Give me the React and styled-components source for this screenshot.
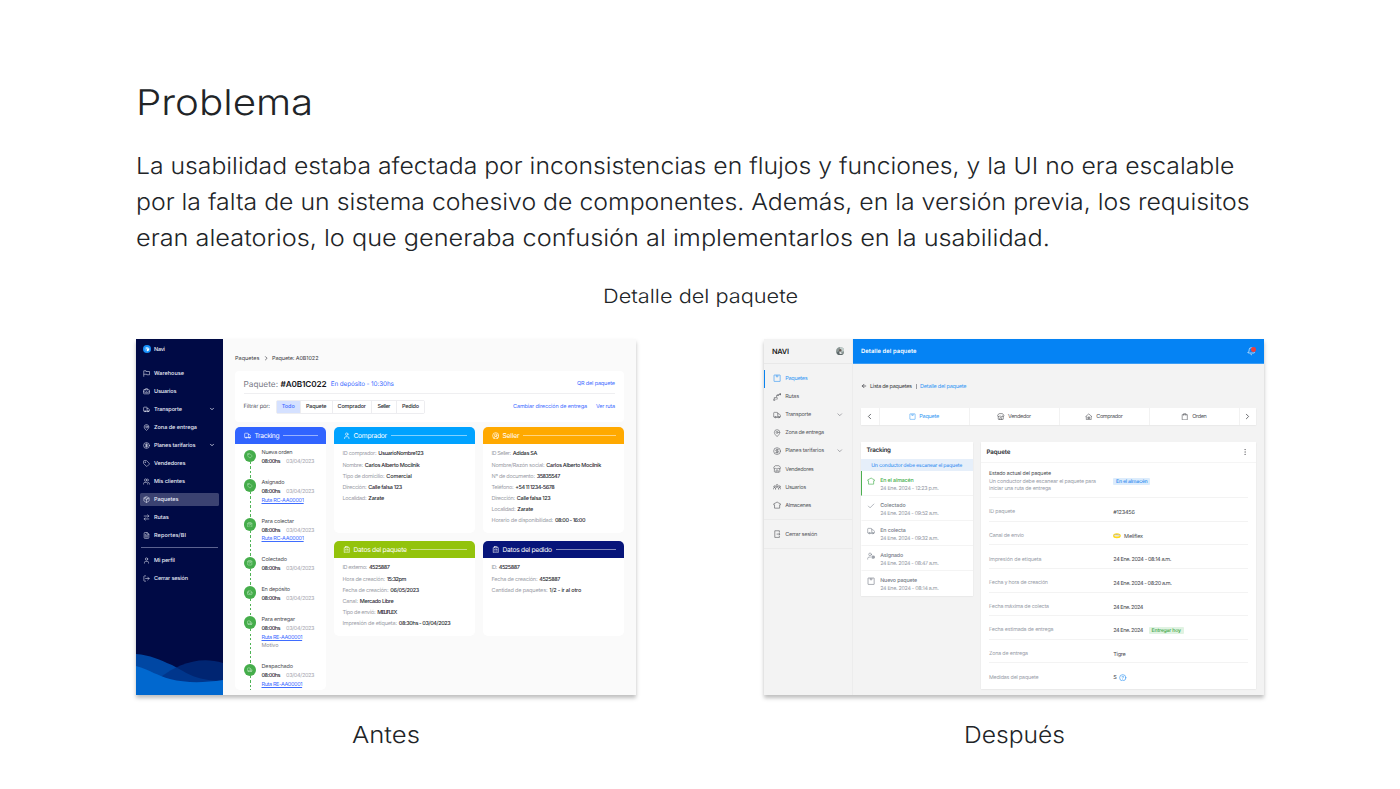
import React, { useLayoutEffect, useRef, useState } from "react";
import styled, { createGlobalStyle } from "styled-components";
import {
  Truck, MapPin, CircleDollarSign, Tag, Users, Package, FileText, User, LogOut,
  ChevronDown, ChevronRight, ChevronLeft, BriefcaseBusiness, CircleUserRound, ClipboardList,
  ShoppingBag, ArrowLeft, Store, Bell, EllipsisVertical, Check, UserCog, CircleHelp, Inbox, ArrowRightLeft,
} from "lucide-react";

const Global = createGlobalStyle`
  * { box-sizing: border-box; }
  body {
    margin: 0;
    background: #fff;
    font-family: Inter, "Liberation Sans", sans-serif;
    text-rendering: geometricPrecision;
  }
  svg { display: block; flex: none; }
`;

/* Text that fills a given measure, either tracked or widened. */
const Measure = styled.span`
  display: inline-block;
  flex: none;
  width: ${(p) => p.$w}px;
  white-space: nowrap;
  text-align: left;
  color: ${(p) => p.$color || "inherit"};
  font-weight: ${(p) => p.$weight || "inherit"};
  font-size: ${(p) => (p.$size ? p.$size + "px" : "inherit")};
  text-decoration: ${(p) => (p.$underline ? "underline" : "none")};
`;
const Run = styled.span`
  display: inline-block;
  transform-origin: 0 50%;
`;

function Fit({ w, children, color, weight, size, underline }) {
  const ref = useRef(null);
  const [spacing, setSpacing] = useState(0);
  useLayoutEffect(() => {
    const el = ref.current;
    const natural = el.getBoundingClientRect().width;
    const count = el.textContent.length;
    if (count > 1) setSpacing((w - natural) / (count - 1));
  }, [w]);
  return (
    <Measure $w={w} $color={color} $weight={weight} $size={size} $underline={underline}>
      <span ref={ref} style={{ letterSpacing: spacing }}>{children}</span>
    </Measure>
  );
}

function Wide({ w, children }) {
  const ref = useRef(null);
  const [scale, setScale] = useState(1);
  useLayoutEffect(() => {
    setScale(w / ref.current.offsetWidth);
  }, [w]);
  return (
    <Measure $w={w}>
      <Run ref={ref} style={{ transform: `scaleX(${scale})` }}>{children}</Run>
    </Measure>
  );
}

/* ---------- Slide ---------- */

const Slide = styled.main`
  width: 1400px;
  height: 789px;
  padding: 81px 136px 0;
  color: #212427;
  font-weight: 300;
  overflow: hidden;
`;
const Title = styled.h1`
  margin: 0;
  font-size: 35.5px;
  font-weight: 300;
  line-height: 44px;
`;
const Lead = styled.p`
  margin: 23px 0 0;
  display: flex;
  flex-direction: column;
  font-size: 23.4px;
  line-height: 36px;
`;
const Subtitle = styled.h2`
  margin: 28px 0 0;
  text-align: center;
  font-size: 19.5px;
  font-weight: 300;
  line-height: 24px;
`;
const Compare = styled.section`
  display: flex;
  justify-content: space-between;
  margin-top: 31px;
`;
const Shot = styled.figure`
  margin: 0;
  width: 500px;
`;
const Screen = styled.div`
  display: flex;
  height: 355.6px;
  overflow: hidden;
  background: ${(p) => p.$bg};
  font-size: 5.5px;
  font-weight: 400;
  line-height: 8px;
  box-shadow: 0 3px 4px rgba(0, 0, 0, 0.26);
  ${Measure} {
    margin: 0.7px 0 -0.7px;
  }
`;
const Caption = styled.figcaption`
  margin-top: 24.4px;
  text-align: center;
  font-size: 23.4px;
  line-height: 32px;
`;

/* ---------- Before ---------- */

const NavySide = styled.aside`
  display: flex;
  flex-direction: column;
  width: 87px;
  background: #000a45;
  color: #e9ecf8;
  flex: none;
`;
const NavyBrand = styled.div`
  display: flex;
  align-items: center;
  gap: 3px;
  height: 20px;
  padding-left: 7px;
  margin-bottom: 7.5px;
`;
const NavyItem = styled.div`
  display: flex;
  align-items: center;
  gap: 3.6px;
  height: 13px;
  margin: 0 4.5px 5.07px 4px;
  padding: 0 4px 0 3.4px;
  border-radius: 1.5px;
  background: ${(p) => (p.$active ? "#3b4271" : "transparent")};
  font-weight: 500;
  svg:nth-of-type(2) { margin-left: auto; }
`;
const NavyRule = styled.div`
  height: 1px;
  margin: 0.2px 5px 5.2px;
  background: #5c6390;
`;
const Waves = styled.svg`
  margin-top: auto;
`;
const OldMain = styled.div`
  flex: 1;
  padding: 14px 12.5px 0 12px;
`;
const OldCrumbs = styled.div`
  display: flex;
  align-items: center;
  gap: 3px;
  height: 10px;
  color: #3c3c43;
`;
const HeadCard = styled.div`
  height: 50.5px;
  margin-top: 8px;
  padding: 0 8.5px;
  border-radius: 4px;
  background: #fff;
`;
const HeadRow = styled.div`
  display: flex;
  align-items: center;
  height: ${(p) => p.$h}px;
  gap: ${(p) => p.$gap}px;
  padding-top: ${(p) => (p.$line ? 3 : 0)}px;
  color: #51545e;
  border-bottom: ${(p) => (p.$line ? "1px solid #efeff1" : "none")};
`;
const Push = styled.div`
  display: flex;
  gap: 9px;
  margin-left: auto;
  color: #3f6dff;
`;
const Segments = styled.div`
  display: flex;
  height: 13.5px;
  border: 0.8px solid #ededf0;
  border-radius: 2px;
  color: #2b2b30;
  font-weight: 500;
`;
const Segment = styled.div`
  display: flex;
  align-items: center;
  justify-content: center;
  width: ${(p) => p.$w}px;
  background: ${(p) => (p.$active ? "#d5e1ff" : "#fff")};
  color: ${(p) => (p.$active ? "#3f6dff" : "inherit")};
  & + & { border-left: 0.8px solid #ededf0; }
`;
const Board = styled.div`
  display: grid;
  grid-template-columns: 91px 141px 140.5px;
  grid-template-rows: 106px 94.5px;
  column-gap: 8px;
  row-gap: 8px;
  margin-top: 5.5px;
`;
const Card = styled.div`
  grid-row: ${(p) => (p.$tall ? "1 / span 2" : "auto")};
  height: ${(p) => (p.$tall ? "263px" : "auto")};
  border-radius: 5px;
  background: #fff;
  overflow: hidden;
`;
const CardHead = styled.div`
  display: flex;
  align-items: center;
  gap: 3.5px;
  height: 17px;
  padding: 0 8px 0 8.5px;
  background: ${(p) => p.$bg};
  color: #fff;
  font-size: 6.7px;
`;
const HeadLine = styled.div`
  flex: 1;
  height: 1px;
  background: rgba(255, 255, 255, 0.5);
`;
const Fields = styled.div`
  padding: 4.2px 8.5px;
`;
const Field = styled.div`
  display: flex;
  align-items: center;
  gap: 1.8px;
  height: 11.1px;
  color: #9a9ca6;
`;
const Steps = styled.div`
  margin-top: 4.7px;
`;
const Step = styled.div`
  display: flex;
  gap: 5px;
  height: ${(p) => p.$lines * 8.8 + 12.2}px;
  padding-left: 8.5px;
`;
const Rail = styled.div`
  display: flex;
  flex-direction: column;
  align-items: center;
  width: 13px;
  padding-top: 1px;
`;
const Dot = styled.div`
  display: flex;
  align-items: center;
  justify-content: center;
  flex: none;
  width: 12.6px;
  height: 12.6px;
  border-radius: 50%;
  background: #45ad4b;
  color: #d8f2d9;
`;
const Dashes = styled.div`
  flex: 1;
  width: 1px;
  margin-left: 1px;
  background: repeating-linear-gradient(#4fb356 0 2.4px, transparent 2.4px 4.5px);
`;
const StepText = styled.div`
  display: flex;
  flex-direction: column;
  line-height: 8.8px;
  color: #4a4b52;
`;
const StepTime = styled.div`
  display: flex;
  gap: 5.5px;
`;

const FlagIcon = () => (
  <svg width="7" height="7" viewBox="0 0 14 14" fill="none" stroke="currentColor" strokeWidth="1.1">
    <path d="M1.5 13.5V1.5h4.500v1.500h7v6.500H7.500V8.500H1.500" />
  </svg>
);

const NAVY_ITEMS = [
  ["Warehouse", 30, FlagIcon],
  ["Usuarios", 22.5, BriefcaseBusiness],
  ["Transporte", 28, Truck, true],
  ["Zona de entrega", 43, MapPin],
  ["Planes tarifarios", 41.5, CircleDollarSign, true],
  ["Vendedores", 31.5, Tag],
  ["Mis clientes", 31, Users],
  ["Paquetes", 24.5, Package],
  ["Rutas", 14.7, ArrowRightLeft],
  ["Reportes/BI", 32, FileText],
];

function NavyRow({ item, active }) {
  const [label, w, Icon, open] = item;
  return (
    <NavyItem $active={active}>
      <Icon size={7} strokeWidth={1.9} />
      <Fit w={w}>{label}</Fit>
      {open && <ChevronDown size={6} strokeWidth={3} />}
    </NavyItem>
  );
}

const STEPS = [
  ["Nueva orden", 31, Tag],
  ["Asignado", 23, Tag, "Ruta RC-AA00001", 42.5],
  ["Para colectar", 32.5, ShoppingBag, "Ruta RC-AA00001", 42.5],
  ["Colectado", 25.5, ShoppingBag],
  ["En depósito", 28.5, Inbox],
  ["Para entregar", 33.5, Truck, "Ruta RE-AA00001", 41, "Motivo"],
  ["Despachado", 31.5, Truck, "Ruta RE-AA00001", 41],
];

const INFO = [
  {
    title: "Comprador", w: 33.5, bg: "#00a2ff", Icon: User,
    rows: [
      ["ID comprador:", 34, "UsuarioNombre123", 45.5],
      ["Nombre:", 20.5, "Carlos Alberto Mocilnik", 55],
      ["Tipo de domicilio:", 42, "Comercial", 25.5],
      ["Dirección:", 24, "Calle falsa 123", 34],
      ["Localidad:", 24, "Zarate", 16],
    ],
  },
  {
    title: "Seller", w: 17, bg: "#ffa900", Icon: CircleUserRound,
    rows: [
      ["ID Seller:", 19.5, "Adidas SA", 24.5],
      ["Nombre/Razón social:", 53, "Carlos Alberto Mocilnik", 55],
      ["Nº de documento:", 43.5, "35835547", 23.5],
      ["Teléfono:", 22, "+54 11 1234-5678", 39.5],
      ["Dirección:", 23.5, "Calle falsa 123", 34],
      ["Localidad:", 24, "Zarate", 16],
      ["Horario de disponibilidad:", 61.7, "08:00 - 16:00", 30.5],
    ],
  },
  {
    title: "Datos del paquete", w: 53.5, bg: "#93c30b", Icon: ClipboardList,
    rows: [
      ["ID externo:", 24.7, "4525887", 21],
      ["Hora de creación:", 42.5, "15:32pm", 19.5],
      ["Fecha de creación:", 46, "06/05/2023", 29],
      ["Canal:", 15.5, "Mercado Libre", 34],
      ["Tipo de envió:", 33, "MELIFLEX", 20],
      ["Impresión de etiqueta:", 54.5, "08:30hs - 03/04/2023", 52],
    ],
  },
  {
    title: "Datos del pedido", w: 49.5, bg: "#07157a", Icon: ClipboardList,
    rows: [
      ["ID:", 5.5, "4525887", 21],
      ["Fecha de creación:", 46, "4525887", 21],
      ["Cantidad de paquetes:", 56, "1/2 - ir al otro", 32],
    ],
  },
];

function Before() {
  return (
    <Screen $bg="#fafafa">
      <NavySide>
        <NavyBrand>
          <svg width="8" height="8" viewBox="0 0 16 16">
            <circle cx="8" cy="8" r="8" fill="#1690fa" />
            <path d="M3.5 6L8 3.8 12.5 6 8 8.3z" fill="#bfe3ff" />
            <path d="M8 8.3L12.5 6v4.5L8 13z" fill="#fff" />
            <path d="M3.5 6L8 8.3V13l-4.5-2.5z" fill="#55b2ff" />
          </svg>
          <Fit w={11} weight={500}>Navi</Fit>
        </NavyBrand>
        {NAVY_ITEMS.map((item) => (
          <NavyRow key={item[0]} item={item} active={item[0] === "Paquetes"} />
        ))}
        <NavyRule />
        <NavyRow item={["Mi perfil", 21, User]} />
        <NavyRow item={["Cerrar sesión", 34, LogOut]} />
        <Waves width="87" height="43" viewBox="0 0 87 43">
          <path d="M0 2C14 3 24 8 36 13 48 19 58 29 87 29V43H0z" fill="#0047a3" />
          <path d="M26 24C40 14 62 3 87 11V43H26z" fill="#003184" opacity=".72" />
          <path d="M0 14C14 18 22 24 34 27 50 31 66 31 87 28V43H0z" fill="#0168cf" />
        </Waves>
      </NavySide>
      <OldMain>
        <OldCrumbs>
          <Fit w={24.5}>Paquetes</Fit>
          <ChevronRight size={6.5} strokeWidth={2.5} />
          <Fit w={46.5}>Paquete: A0B1022</Fit>
        </OldCrumbs>
        <HeadCard>
          <HeadRow $h={23} $gap={2.5} $line>
            <Fit w={34.5} size={8.2} color="#777984">Paquete:</Fit>
            <Fit w={46} size={8.2} weight={600} color="#16161a">#A0B1C022</Fit>
            <Fit w={65} size={6.4} color="#3f6dff">{"\u00a0En depósito - 10:30hs"}</Fit>
            <Push><Fit w={38}>QR del paquete</Fit></Push>
          </HeadRow>
          <HeadRow $h={25.5} $gap={5.5}>
            <Fit w={26.5} size={5.7}>Filtrar por:</Fit>
            <Segments>
              <Segment $w={23.5} $active><Fit w={13}>Todo</Fit></Segment>
              <Segment $w={31.5}><Fit w={20.5}>Paquete</Fit></Segment>
              <Segment $w={39.5}><Fit w={28.5}>Comprador</Fit></Segment>
              <Segment $w={25}><Fit w={13}>Seller</Fit></Segment>
              <Segment $w={28}><Fit w={17}>Pedido</Fit></Segment>
            </Segments>
            <Push>
              <Fit w={74}>Cambiar dirección de entrega</Fit>
              <Fit w={19}>Ver ruta</Fit>
            </Push>
          </HeadRow>
        </HeadCard>
        <Board>
          <Card $tall>
            <CardHead $bg="#3164ff">
              <Truck size={7.5} strokeWidth={1.9} />
              <Fit w={25}>Tracking</Fit>
              <HeadLine />
            </CardHead>
            <Steps>
              {STEPS.map(([name, w, Icon, link, lw, note]) => (
                <Step key={name} $lines={2 + (link ? 1 : 0) + (note ? 1 : 0)}>
                  <Rail>
                    <Dot><Icon size={5.5} strokeWidth={1.8} /></Dot>
                    <Dashes />
                  </Rail>
                  <StepText>
                    <Fit w={w}>{name}</Fit>
                    <StepTime>
                      <Fit w={19} weight={500} color="#2b2b30">08:00hs</Fit>
                      <Fit w={28.5} color="#a6a7b0">03/04/2023</Fit>
                    </StepTime>
                    {link && <Fit w={lw} color="#3f6dff" underline>{link}</Fit>}
                    {note && <Fit w={17} color="#8d8f99">{note}</Fit>}
                  </StepText>
                </Step>
              ))}
            </Steps>
          </Card>
          {INFO.map(({ title, w, bg, Icon, rows }) => (
            <Card key={title}>
              <CardHead $bg={bg}>
                <Icon size={7.5} strokeWidth={2} />
                <Fit w={w}>{title}</Fit>
                <HeadLine />
              </CardHead>
              <Fields>
                {rows.map(([label, lw, value, vw]) => (
                  <Field key={label}>
                    <Fit w={lw}>{label}</Fit>
                    <Fit w={vw} weight={500} color="#2a2a30">{value}</Fit>
                  </Field>
                ))}
              </Fields>
            </Card>
          ))}
        </Board>
      </OldMain>
    </Screen>
  );
}

/* ---------- After ---------- */

const PaleSide = styled.aside`
  display: flex;
  flex-direction: column;
  width: 89px;
  flex: none;
  border-right: 1px solid #ececec;
  color: #56585d;
`;
const PaleBrand = styled.div`
  display: flex;
  align-items: center;
  justify-content: space-between;
  height: 25px;
  padding: 0 8px;
  border-bottom: 1px solid #e8e8e8;
  color: #222;
  font-size: 7.4px;
`;
const PaleNav = styled.nav`
  padding: ${(p) => p.$pad};
  border-bottom: 1px solid #ebebeb;
`;
const PaleItem = styled.div`
  display: flex;
  align-items: center;
  gap: 4.5px;
  height: 18.07px;
  padding: 0 9px 0 7.5px;
  border-left: 1px solid ${(p) => (p.$active ? "#0a84f0" : "transparent")};
  color: ${(p) => (p.$active ? "#3397f3" : "inherit")};
  & > svg:nth-of-type(2) { margin-left: auto; color: #77797e; }
`;
const NewMain = styled.div`
  flex: 1;
  display: flex;
  flex-direction: column;
`;
const BlueBar = styled.header`
  display: flex;
  align-items: center;
  justify-content: space-between;
  height: 25px;
  padding: 0.6px 8.5px 0 8px;
  background: #0583f4;
  border-bottom: 1px solid #3b9df5;
  color: #fff;
`;
const BellBox = styled.div`
  position: relative;
`;
const BellBadge = styled.i`
  position: absolute;
  top: 0;
  right: -0.5px;
  width: 4.6px;
  height: 4.6px;
  border-radius: 50%;
  background: #ee3f3c;
`;
const NewBody = styled.div`
  padding: 18px 8.5px 0 8px;
`;
const NewCrumbs = styled.div`
  display: flex;
  align-items: center;
  gap: 3px;
  height: 8.6px;
  color: #3c3d42;
`;
const CrumbBar = styled.span`
  width: 1px;
  height: 4.5px;
  margin: 0.6px 0.5px 0;
  background: #9a9ba0;
`;
const Tabs = styled.div`
  display: flex;
  height: 17px;
  margin-top: 17.4px;
  background: #fff;
  box-shadow: 0 0.5px 1.5px rgba(0, 0, 0, 0.1);
  color: #4e5055;
`;
const Tab = styled.div`
  display: flex;
  align-items: center;
  justify-content: center;
  gap: 3.5px;
  width: ${(p) => p.$w}px;
  color: ${(p) => (p.$active ? "#3397f3" : "inherit")};
  & + & { border-left: 1px solid #f2f2f2; }
`;
const Columns = styled.div`
  display: flex;
  align-items: flex-start;
  gap: 8.5px;
  margin-top: 17px;
`;
const Panel = styled.section`
  width: ${(p) => p.$w}px;
  background: #fff;
  box-shadow: 0 0.5px 1.5px rgba(0, 0, 0, 0.1);
`;
const PanelHead = styled.div`
  display: flex;
  align-items: center;
  justify-content: space-between;
  height: ${(p) => p.$h}px;
  padding: 0 7px 0 5.5px;
  color: #2d2e33;
  font-size: 6.2px;
  font-weight: 600;
`;
const Notice = styled.div`
  display: flex;
  align-items: center;
  justify-content: center;
  height: 12.5px;
  background: #e6effa;
  color: #3f95f2;
`;
const Event = styled.div`
  display: flex;
  gap: 5px;
  height: 25px;
  padding: 5.2px 0 0 5px;
  border-left: 1px solid ${(p) => (p.$active ? "#4caf50" : "transparent")};
  border-bottom: 1px solid ${(p) => (p.$last ? "transparent" : "#f4f4f4")};
  color: ${(p) => (p.$active ? "#3fae49" : "#757b86")};
`;
const EventText = styled.div`
  display: flex;
  flex-direction: column;
  padding-top: 0.4px;
  line-height: 7.8px;
  font-size: 5.3px;
`;
const Status = styled.div`
  display: flex;
  align-items: center;
  height: 35.2px;
  margin: 0 8px;
  border-bottom: 1px solid #f3f3f3;
  padding-top: 3px;
`;
const HeadDivider = styled.div`
  height: 1px;
  background: #f5f5f5;
`;
const LabelCell = styled.div`
  display: flex;
  flex-direction: column;
  flex: none;
  width: 124.3px;
  line-height: 7.5px;
  color: #969ba6;
`;
const Detail = styled.div`
  display: flex;
  align-items: center;
  height: ${(p) => (p.$last ? 26 : 23.62)}px;
  margin: 0 8px;
  padding: 6px 0 ${(p) => (p.$last ? 2.4 : 0)}px;
  border-bottom: 1px solid ${(p) => (p.$last ? "transparent" : "#f3f3f3")};
`;
const Value = styled.div`
  display: flex;
  align-items: center;
  color: #44464c;
  gap: 3px;
`;
const Badge = styled.div`
  display: flex;
  align-items: center;
  height: 7.5px;
  padding: 0 2.8px;
  border-radius: 1px;
  margin-left: ${(p) => p.$ml || 0}px;
  background: ${(p) => p.$bg};
  color: ${(p) => p.$fg};
`;

const Glyph = ({ size = 8, children }) => (
  <svg width={size} height={size} viewBox="0 0 16 16" fill="none" stroke="currentColor" strokeWidth="1.2" strokeLinejoin="round">
    {children}
  </svg>
);
const BoxIcon = ({ size }) => (
  <Glyph size={size}><rect x="2" y="2" width="12" height="12.5" rx="0.5" /><path d="M6.5 2v3.5h3V2" /></Glyph>
);
const RouteIcon = ({ size }) => (
  <Glyph size={size}>
    <circle cx="2.5" cy="13.5" r="1.5" /><circle cx="14" cy="2.5" r="1.3" fill="currentColor" />
    <path d="M2.5 12V9h4.5V4.500h2.500" /><path d="M5 12h3.500V8.500" strokeWidth=".9" />
    <circle cx="10" cy="4" r="1" fill="currentColor" />
  </Glyph>
);
const PeopleIcon = ({ size }) => (
  <Glyph size={size}>
    <circle cx="8" cy="5" r="2" /><circle cx="3" cy="7" r="1.5" /><circle cx="13" cy="7" r="1.5" />
    <path d="M5 13V10l3-2.500L11 10v3M0.500 12.500v-2L3 8.700l2 1.500M15.500 12.500v-2L13 8.700l-2 1.500" />
  </Glyph>
);
const DepotIcon = ({ size }) => (
  <Glyph size={size}><path d="M3 14V7.500H1.500V5.500L5.500 3.500 8 2l2.500 1.500 4 2v2H13V14z" /></Glyph>
);
const BuyerIcon = ({ size }) => (
  <Glyph size={size}><path d="M2.800 14V7.500H1.500L8 2l6.500 5.500h-1.300V14z" /><path d="M6 12V8.500h4V12zM8 8.500V12" /></Glyph>
);
const OrderIcon = ({ size }) => (
  <Glyph size={size}><path d="M2.500 3.500h11v11h-11z" /><path d="M5.500 5.500V1.500h5v4" /></Glyph>
);
const ExitIcon = ({ size }) => (
  <Glyph size={size}><path d="M12.500 5V1.500h-9v13h9V11M7 8h6.500M11.500 6l2 2-2 2" /></Glyph>
);

const PALE_ITEMS = [
  ["Paquetes", 22.5, BoxIcon],
  ["Rutas", 14, RouteIcon],
  ["Transporte", 26, Truck, true],
  ["Zona de entrega", 39, MapPin],
  ["Planes tarifarios", 39, CircleDollarSign, true],
  ["Vendedores", 28.5, Store],
  ["Usuarios", 21, PeopleIcon],
  ["Almacenes", 26, DepotIcon],
];

const EVENTS = [
  ["En el almacén", 33.5, DepotIcon, "24 Ene. 2024 - 12:23 p.m."],
  ["Colectado", 25.5, Check, "24 Ene. 2024 - 09:52 a.m."],
  ["En colecta", 25.5, Truck, "24 Ene. 2024 - 09:32 a.m."],
  ["Asignado", 23, UserCog, "24 Ene. 2024 - 08:47 a.m."],
  ["Nuevo paquete", 37, BoxIcon, "24 Ene. 2024 - 08:14 a.m."],
];

function PaleRow({ item, active }) {
  const [label, w, Icon, open] = item;
  return (
    <PaleItem $active={active}>
      <Icon size={8.2} strokeWidth={1.7} />
      <Fit w={w}>{label}</Fit>
      {open && <ChevronDown size={7.5} strokeWidth={2} />}
    </PaleItem>
  );
}

function DetailRow({ label, w, last, children }) {
  return (
    <Detail $last={last}>
      <LabelCell><Fit w={w} size={5.3}>{label}</Fit></LabelCell>
      <Value>{children}</Value>
    </Detail>
  );
}

function After() {
  return (
    <Screen $bg="#f3f3f3">
      <PaleSide>
        <PaleBrand>
          <Fit w={17} weight={600}>NAVI</Fit>
          <svg width="8.5" height="8.5" viewBox="0 0 16 16">
            <circle cx="8" cy="8" r="8" fill="#8b9694" />
            <path d="M8 0a8 8 0 0 1 8 8l-5 1-4-4z" fill="#c3cfcd" />
            <path d="M1 11l4-3 6 2 1 5a8 8 0 0 1-11-4z" fill="#5d6769" />
            <circle cx="8" cy="6" r="2.3" fill="#6b5d57" />
            <path d="M6 9h4l1 4H7z" fill="#e1e4e2" />
          </svg>
        </PaleBrand>
        <PaleNav $pad="5.5px 0 5px">
          {PALE_ITEMS.map((item) => (
            <PaleRow key={item[0]} item={item} active={item[0] === "Paquetes"} />
          ))}
        </PaleNav>
        <PaleNav $pad="5px 0 5px">
          <PaleRow item={["Cerrar sesión", 32, ExitIcon]} />
        </PaleNav>
      </PaleSide>
      <NewMain>
        <BlueBar>
          <Fit w={55.5} weight={600} size={5.8}>Detalle del paquete</Fit>
          <BellBox>
            <Bell size={8.5} strokeWidth={1.8} />
            <BellBadge />
          </BellBox>
        </BlueBar>
        <NewBody>
          <NewCrumbs>
            <ArrowLeft size={6} strokeWidth={2.8} />
            <Fit w={42}>Lista de paquetes</Fit>
            <CrumbBar />
            <Fit w={46.5} color="#3397f3">Detalle del paquete</Fit>
          </NewCrumbs>
          <Tabs>
            <Tab $w={17.5}><ChevronLeft size={9} strokeWidth={2.2} /></Tab>
            <Tab $w={90} $active><BoxIcon size={7} /><Fit w={20}>Paquete</Fit></Tab>
            <Tab $w={90}><Store size={7.5} strokeWidth={1.9} /><Fit w={23}>Vendedor</Fit></Tab>
            <Tab $w={90}><BuyerIcon size={7.5} /><Fit w={26.5}>Comprador</Fit></Tab>
            <Tab $w={90}><OrderIcon size={7.5} /><Fit w={14.5}>Orden</Fit></Tab>
            <Tab $w={17}><ChevronRight size={9} strokeWidth={2.2} /></Tab>
          </Tabs>
          <Columns>
            <Panel $w={111.5}>
              <PanelHead $h={17}><Fit w={24.5}>Tracking</Fit></PanelHead>
              <Notice><Fit w={91} size={5.2} weight={500}>Un conductor debe escanear el paquete</Fit></Notice>
              {EVENTS.map(([name, w, Icon, date], i) => (
                <Event key={name} $active={i === 0} $last={i === EVENTS.length - 1}>
                  <Icon size={8.2} strokeWidth={1.6} />
                  <EventText>
                    <Fit w={w} weight={500}>{name}</Fit>
                    <Fit w={58.5} color="#9297a2">{date}</Fit>
                  </EventText>
                </Event>
              ))}
            </Panel>
            <Panel $w={274.5}>
              <PanelHead $h={20}>
                <Fit w={24}>Paquete</Fit>
                <EllipsisVertical size={8} strokeWidth={1} />
              </PanelHead>
              <HeadDivider />
              <Status>
                <LabelCell>
                  <Fit w={62} size={5.3} color="#44464c">Estado actual del paquete</Fit>
                  <Fit w={107} size={5.3}>Un conductor debe escanear el paquete para</Fit>
                  <Fit w={62} size={5.3}>iniciar una ruta de entrega</Fit>
                </LabelCell>
                <Badge $bg="#dcecfc" $fg="#2f8cf0"><Fit w={31.5} size={5.2} weight={500}>En el almacén</Fit></Badge>
              </Status>
              <DetailRow label="ID paquete" w={26}><Fit w={21.5}>#123456</Fit></DetailRow>
              <DetailRow label="Canal de envio" w={35}>
                <svg width="7.8" height="5.5" viewBox="0 0 16 11">
                  <ellipse cx="8" cy="5.5" rx="8" ry="5.2" fill="#ffd91a" />
                  <path d="M1 4.5Q4.5 2 8 3.3 11.5 2 15 4.500L11 7H5z" fill="#f5f1e2" />
                  <path d="M2 4.5Q5 3 8 3.5T14 4.5" stroke="#6b7797" strokeWidth=".8" fill="none" />
                </svg>
                <Fit w={19}>Meliflex</Fit>
              </DetailRow>
              <DetailRow label="Impresión de etiqueta" w={52.5}><Fit w={58}>24 Ene. 2024 - 08:14 a.m.</Fit></DetailRow>
              <DetailRow label="Fecha y hora de creación" w={59}><Fit w={58.5}>24 Ene. 2024 - 08:20 a.m.</Fit></DetailRow>
              <DetailRow label="Fecha máxima de colecta" w={60}><Fit w={30}>24 Ene. 2024</Fit></DetailRow>
              <DetailRow label="Fecha estimada de entrega" w={64.5}>
                <Fit w={30}>24 Ene. 2024</Fit>
                <Badge $bg="#e0f3e2" $fg="#3fa648" $ml={2.5}><Fit w={29.5} size={5.2} weight={500}>Entregar hoy</Fit></Badge>
              </DetailRow>
              <DetailRow label="Zona de entrega" w={39}><Fit w={12.5}>Tigre</Fit></DetailRow>
              <DetailRow label="Medidas del paquete" w={49.5} last>
                <Fit w={3}>S</Fit>
                <CircleHelp size={7.5} strokeWidth={2} color="#3397f3" />
              </DetailRow>
            </Panel>
          </Columns>
        </NewBody>
      </NewMain>
    </Screen>
  );
}

export default function App() {
  return (
    <Slide>
      <Global />
      <Title><Wide w={177}>Problema</Wide></Title>
      <Lead>
        <Wide w={1098}>La usabilidad estaba afectada por inconsistencias en flujos y funciones, y la UI no era escalable</Wide>
        <Wide w={1114}>por la falta de un sistema cohesivo de componentes. Además, en la versión previa, los requisitos</Wide>
        <Wide w={914}>eran aleatorios, lo que generaba confusión al implementarlos en la usabilidad.</Wide>
      </Lead>
      <Subtitle><Wide w={195}>Detalle del paquete</Wide></Subtitle>
      <Compare>
        <Shot>
          <Before />
          <Caption><Wide w={68}>Antes</Wide></Caption>
        </Shot>
        <Shot>
          <After />
          <Caption><Wide w={101}>Después</Wide></Caption>
        </Shot>
      </Compare>
    </Slide>
  );
}
